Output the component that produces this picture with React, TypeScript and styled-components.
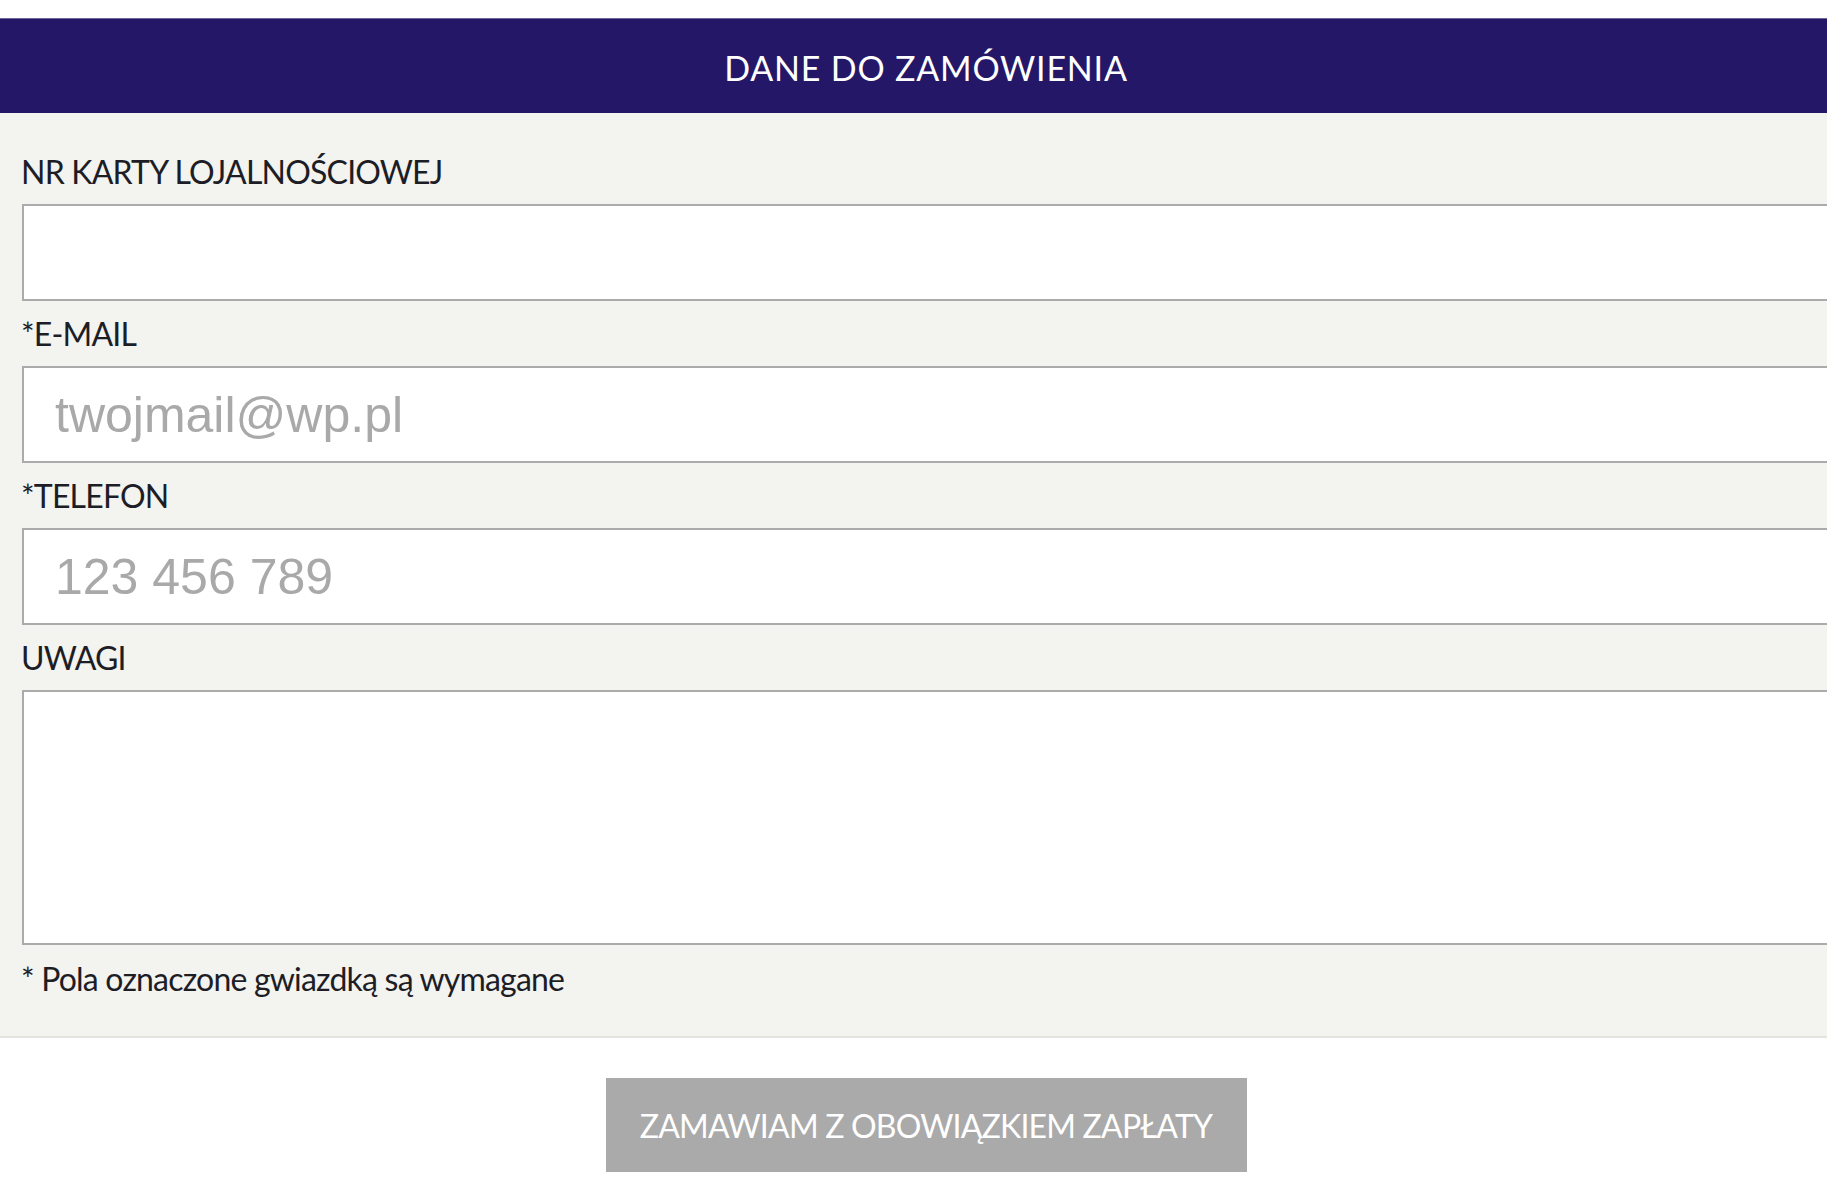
import React from "react";
import styled, { createGlobalStyle } from "styled-components";

const Global = createGlobalStyle`
  html, body { margin: 0; padding: 0; background: #ffffff; overflow: hidden; }
  body { font-family: Lato, "Open Sans", Arial, sans-serif; }
  * { box-sizing: border-box; }
`;

const Page = styled.div`
  width: 1852px;
  padding-top: 18px;
  display: flex;
  flex-direction: column;
`;

const Header = styled.header`
  height: 95px;
  background: #241768;
  border-top: 1px solid #6e6796;
  display: flex;
  align-items: center;
  justify-content: center;
  padding-top: 2px;
  color: #ffffff;
  font-family: Lato, sans-serif;
  font-size: 34px;
  letter-spacing: 0.8px;
`;

const Panel = styled.section`
  background: #f3f3ef;
  border-bottom: 2px solid #e4e4df;
  padding: 42px 22px 40px;
  display: flex;
  flex-direction: column;
`;

const Field = styled.div`
  display: flex;
  flex-direction: column;
  margin-bottom: 16px;
`;

const Label = styled.label`
  font-family: Lato, sans-serif;
  font-size: 32px;
  line-height: 34px;
  color: #1d1d26;
  letter-spacing: -0.8px;
  margin-bottom: 15px;
  margin-left: -1px;
`;

const Input = styled.input`
  height: 97px;
  width: 100%;
  border: 2px solid #ababab;
  background: #ffffff;
  padding: 0 0 0 31px;
  font-family: "Liberation Sans", Arial, sans-serif;
  font-size: 50px;
  color: #333;
  outline: none;
  &::placeholder { color: #a9a9a9; }
`;

const TextArea = styled.textarea`
  height: 255px;
  width: 100%;
  border: 2px solid #ababab;
  background: #ffffff;
  resize: none;
  outline: none;
  display: block;
`;

const Note = styled.p`
  margin: 1px 0 0 -1px;
  font-family: Lato, sans-serif;
  font-size: 32px;
  line-height: 34px;
  color: #1d1d26;
  letter-spacing: -0.8px;
`;

const ButtonRow = styled.div`
  display: flex;
  justify-content: center;
  padding-top: 40px;
`;

const Submit = styled.button`
  width: 641px;
  height: 94px;
  border: none;
  background: #aaaaaa;
  color: #ffffff;
  font-family: Lato, sans-serif;
  font-size: 32px;
  letter-spacing: -0.8px;
  padding: 0;
  cursor: pointer;
`;

export default function App() {
  return (
    <>
      <Global />
      <Page>
        <Header>DANE DO ZAMÓWIENIA</Header>
        <Panel>
          <Field>
            <Label>NR KARTY LOJALNOŚCIOWEJ</Label>
            <Input type="text" />
          </Field>
          <Field>
            <Label>*E-MAIL</Label>
            <Input type="email" placeholder="twojmail@wp.pl" />
          </Field>
          <Field>
            <Label>*TELEFON</Label>
            <Input type="tel" placeholder="123 456 789" />
          </Field>
          <Field>
            <Label>UWAGI</Label>
            <TextArea />
          </Field>
          <Note>* Pola oznaczone gwiazdką są wymagane</Note>
        </Panel>
        <ButtonRow>
          <Submit>ZAMAWIAM Z OBOWIĄZKIEM ZAPŁATY</Submit>
        </ButtonRow>
      </Page>
    </>
  );
}
